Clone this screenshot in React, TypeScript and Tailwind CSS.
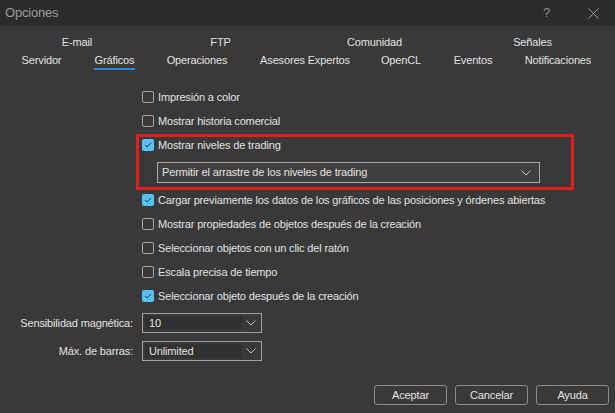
import React from "react";

const font = { fontFamily: '"Liberation Sans", Arial, sans-serif' };

function Chevron() {
  return (
    <svg width="10" height="6" viewBox="0 0 10 6" className="shrink-0 text-[#c4c4c4]">
      <path d="M0.5 0.5 L5 5 L9.5 0.5" fill="none" stroke="currentColor" strokeWidth="1" />
    </svg>
  );
}

function Check({ checked, label }: { checked?: boolean; label: string }) {
  return (
    <div className="flex h-[24px] items-center">
      {checked ? (
        <span className="flex h-[12px] w-[12px] shrink-0 items-center justify-center rounded-[2px] bg-[#55c3f6]">
          <svg width="8" height="6" viewBox="0 0 8 6">
            <path d="M1 3 L3 5 L7 1" fill="none" stroke="#1d3b4d" strokeWidth="1" />
          </svg>
        </span>
      ) : (
        <span className="h-[12px] w-[12px] shrink-0 rounded-[2px] border border-[#a4a4a4]" />
      )}
      <span className="ml-[4px] whitespace-nowrap">{label}</span>
    </div>
  );
}

function SmallSelect({ value }: { value: string }) {
  return (
    <div className="flex h-[20px] w-[120px] items-center border border-[#a0a0a0] p-[2px]">
      <div className="flex h-full w-[97px] items-center bg-[#313131] pl-[4px]">{value}</div>
      <div className="flex flex-1 items-center justify-center">
        <Chevron />
      </div>
    </div>
  );
}

export default function App() {
  const row1 = [
    { t: "E-mail", w: "w-[154px]" },
    { t: "FTP", w: "w-[133px]" },
    { t: "Comunidad", w: "w-[175px]" },
    { t: "Señales", w: "w-[141px]" },
  ];
  const row2 = [
    { t: "Servidor", w: "w-[83px]" },
    { t: "Gráficos", w: "w-[63px]" },
    { t: "Operaciones", w: "w-[102px]" },
    { t: "Asesores Expertos", w: "w-[114px]" },
    { t: "OpenCL", w: "w-[78px]" },
    { t: "Eventos", w: "w-[66px]" },
    { t: "Notificaciones", w: "w-[104px]" },
  ];

  return (
    <div
      style={font}
      className="relative flex h-[413px] w-[615px] flex-col overflow-hidden whitespace-nowrap bg-[#393939] text-[11px] tracking-[-0.15px] text-[#e2e2e2]"
    >
      {/* title bar */}
      <div className="flex h-[26px] items-center bg-[#2b2b2b] pl-[5px] text-[13px] tracking-[-0.2px] text-[#9c9c9c]">
        <span>Opciones</span>
        <span className="ml-auto mr-[38px] text-[13px] text-[#8e8e8e]">?</span>
        <svg width="11" height="11" viewBox="0 0 11 11" className="mr-[16px]">
          <path d="M0.5 0.5 L10.5 10.5 M10.5 0.5 L0.5 10.5" stroke="#9a9a9a" strokeWidth="1" />
        </svg>
      </div>

      {/* tabs */}
      <div className="pt-[7px]">
        <div className="flex h-[18px] items-center">
          {row1.map((r) => (
            <span key={r.t} className={`${r.w} text-center`}>
              {r.t}
            </span>
          ))}
        </div>
        <div className="flex h-[18px] items-center">
          {row2.map((r) => (
            <span key={r.t} className={`${r.w} text-center`}>
              <span className="relative inline-block">
                {r.t}
                {r.t === "Gráficos" && (
                  <span className="absolute -left-[1px] -right-[1px] top-[16px] h-[2px] bg-[#2b86d9]" />
                )}
              </span>
            </span>
          ))}
        </div>
      </div>

      {/* options */}
      <div className="mt-[16px] pl-[142px]">
        <Check label="Impresión a color" />
        <Check label="Mostrar historia comercial" />
        <Check checked label="Mostrar niveles de trading" />
        <div className="h-[31px] pl-[15px] pt-[5px]">
          <div className="flex h-[21px] w-[383px] items-center border border-[#a8a8a8] bg-[#404040] pl-[4px] pr-[8px]">
            <span>Permitir el arrastre de los niveles de trading</span>
            <span className="ml-auto">
              <Chevron />
            </span>
          </div>
        </div>
        <Check checked label="Cargar previamente los datos de los gráficos de las posiciones y órdenes abiertas" />
        <Check label="Mostrar propiedades de objetos después de la creación" />
        <Check label="Seleccionar objetos con un clic del ratón" />
        <Check label="Escala precisa de tiempo" />
        <Check checked label="Seleccionar objeto después de la creación" />
      </div>

      <div className="mt-[5px] flex flex-col gap-[8px]">
        <div className="flex items-center">
          <span className="w-[134px] pr-[1px] text-right">Sensibilidad magnética:</span>
          <span className="ml-[8px]">
            <SmallSelect value="10" />
          </span>
        </div>
        <div className="flex items-center">
          <span className="w-[134px] pr-[1px] text-right">Máx. de barras:</span>
          <span className="ml-[8px]">
            <SmallSelect value="Unlimited" />
          </span>
        </div>
      </div>

      {/* buttons */}
      <div className="mt-auto flex justify-end gap-[8px] pb-[8px] pr-[6px]">
        {["Aceptar", "Cancelar", "Ayuda"].map((b) => (
          <button
            key={b}
            className="flex h-[20px] w-[73px] items-center justify-center rounded-[3px] border border-[#8c8c8c] bg-[#393939]"
          >
            {b}
          </button>
        ))}
      </div>

      {/* annotation box */}
      <div className="pointer-events-none absolute left-[136px] top-[134px] h-[56px] w-[438px] border-[3px] border-[#e31e1e]" />
    </div>
  );
}
